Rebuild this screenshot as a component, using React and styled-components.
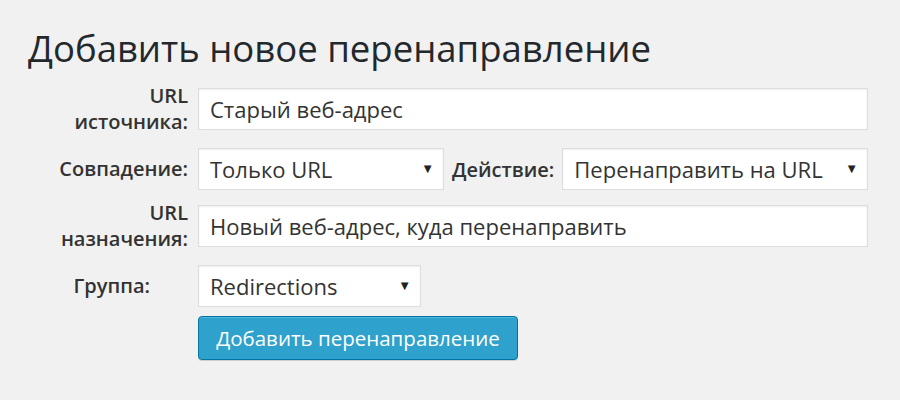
import React from "react";
import styled, { createGlobalStyle } from "styled-components";

const Global = createGlobalStyle`
  html, body { margin: 0; padding: 0; background: #f1f1f1; }
  body { font-family: "Open Sans", "Noto Sans", sans-serif; color: #333; }
`;

const Page = styled.div`
  width: 900px;
  height: 400px;
  box-sizing: border-box;
  padding: 24px 0 0 28px;
  background: #f1f1f1;
`;

const Title = styled.h1`
  margin: 0 0 11px 0;
  font-size: 36.5px;
  font-weight: 400;
  line-height: 48px;
  color: #23282d;
`;

const Form = styled.div`
  display: flex;
  flex-direction: column;
  width: 840px;
`;

const Row = styled.div`
  display: flex;
  align-items: center;
  margin-top: ${(p) => p.$mt || 0}px;
`;

const LabelCell = styled.div`
  width: 160px;
  flex: none;
  box-sizing: border-box;
  padding-right: ${(p) => p.$pr || 0}px;
  text-align: right;
  font-size: 20px;
  font-weight: 600;
  line-height: 26px;
  color: #333;
`;

const InlineLabel = styled.div`
  flex: none;
  margin: 0 8px 0 8px;
  font-size: 20px;
  font-weight: 600;
  color: #333;
`;

const Field = styled.div`
  margin-left: 10px;
  box-sizing: border-box;
  height: 42px;
  background: #fff;
  border: 1px solid #ddd;
  box-shadow: inset 0 1px 2px rgba(0, 0, 0, 0.07);
  display: flex;
  align-items: center;
  padding: 0 9px 0 11px;
  font-size: 22px;
  color: #333;
  ${(p) => (p.$w ? `width: ${p.$w}px; flex: none;` : "flex: 1;")}
  ${(p) => (p.$noMargin ? "margin-left: 0;" : "")}
`;

const FieldText = styled.span`
  flex: 1;
  white-space: nowrap;
`;

const Arrow = styled.span`
  font-size: 13px;
  color: #222;
  margin-top: -2px;
`;

const Button = styled.button`
  margin-left: 10px;
  width: 320px;
  height: 44px;
  box-sizing: border-box;
  background: #2ea2cc;
  border: 1px solid #0074a2;
  border-radius: 4px;
  box-shadow: inset 0 1px 0 rgba(120, 200, 230, 0.5), 0 1px 0 rgba(0, 0, 0, 0.15);
  color: #fff;
  font-family: "Open Sans", "Noto Sans", sans-serif;
  font-size: 20.5px;
  font-weight: 400;
  padding: 0;
`;

const Select = ({ w, noMargin, children }) => (
  <Field $w={w} $noMargin={noMargin}>
    <FieldText>{children}</FieldText>
    <Arrow>▼</Arrow>
  </Field>
);

export default function App() {
  return (
    <Page>
      <Global />
      <Title>Добавить новое перенаправление</Title>
      <Form>
        <Row>
          <LabelCell>
            URL
            <br />
            источника:
          </LabelCell>
          <Field>
            <FieldText>Старый веб-адрес</FieldText>
          </Field>
        </Row>
        <Row $mt={13}>
          <LabelCell>Совпадение:</LabelCell>
          <Select w={246}>Только URL</Select>
          <InlineLabel>Действие:</InlineLabel>
          <Select noMargin>Перенаправить на URL</Select>
        </Row>
        <Row $mt={10}>
          <LabelCell>
            URL
            <br />
            назначения:
          </LabelCell>
          <Field>
            <FieldText>Новый веб-адрес, куда перенаправить</FieldText>
          </Field>
        </Row>
        <Row $mt={13}>
          <LabelCell $pr={38}>Группа:</LabelCell>
          <Select w={223}>Redirections</Select>
        </Row>
        <Row $mt={9}>
          <LabelCell />
          <Button>Добавить перенаправление</Button>
        </Row>
      </Form>
    </Page>
  );
}
